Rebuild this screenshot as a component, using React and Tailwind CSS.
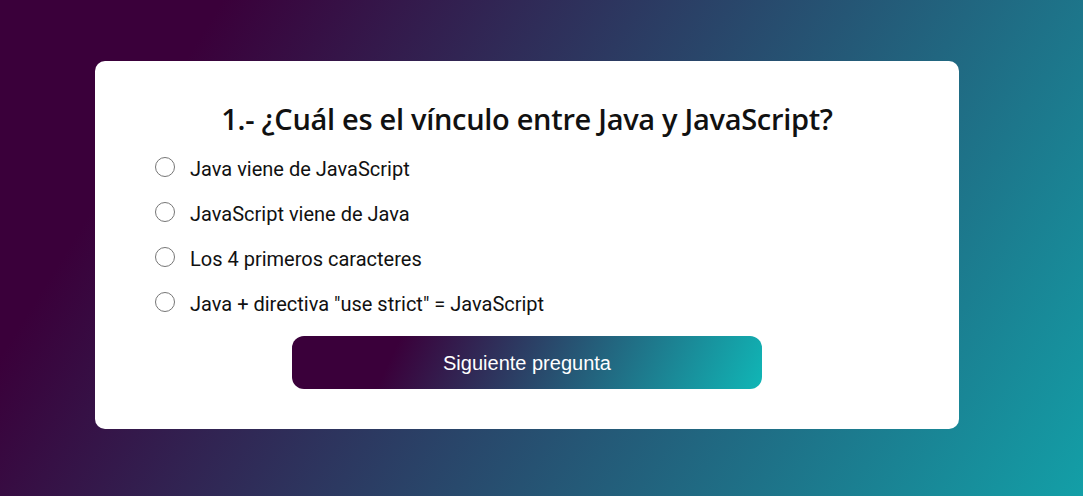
import React from "react";

const options = [
  "Java viene de JavaScript",
  "JavaScript viene de Java",
  "Los 4 primeros caracteres",
  'Java + directiva "use strict" = JavaScript',
];

export default function App() {
  return (
    <div className="w-full h-[496px] overflow-hidden bg-[linear-gradient(122deg,#3a003a_16%,#139fa7_100%)] pt-[61px]">
      <div className="w-[864px] ml-[95px] bg-white rounded-[10px] pt-[40px] pb-[40px]">
        <h2 className="text-center text-[29px] leading-[35px] font-semibold text-[#111] font-['Open_Sans',sans-serif] tracking-[-0.3px]">
          1.- ¿Cuál es el vínculo entre Java y JavaScript?
        </h2>

        <ul className="mt-[10px] pl-[60px]">
          {options.map((opt, i) => (
            <li key={i} className="h-[45px] flex items-center">
              <label className="flex items-center gap-[15px] cursor-pointer">
                <input
                  type="radio"
                  name="q1"
                  className="appearance-none w-5 h-5 rounded-full border border-[#767676] bg-white m-0 -mt-[3px]"
                />
                <span className="text-[20px] text-[#111] font-['Roboto',sans-serif]">
                  {opt}
                </span>
              </label>
            </li>
          ))}
        </ul>

        <div className="mt-[10px] flex justify-center">
          <button className="w-[470px] h-[53px] rounded-[12px] text-white text-[20px] font-['Liberation_Sans',Arial,sans-serif] bg-[linear-gradient(115deg,#3a003a_22%,#10b6b6_100%)]">
            Siguiente pregunta
          </button>
        </div>
      </div>
    </div>
  );
}
